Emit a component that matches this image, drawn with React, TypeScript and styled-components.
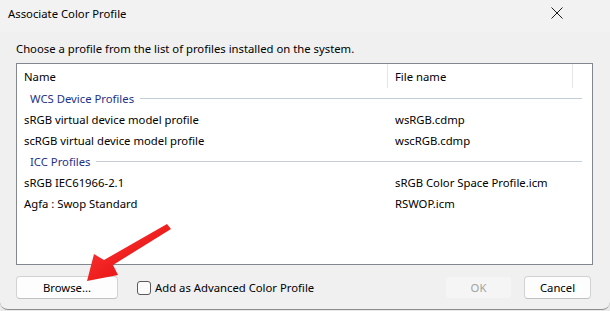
import styled, { createGlobalStyle } from 'styled-components'

const GlobalStyle = createGlobalStyle`
  html, body {
    margin: 0;
    padding: 0;
    background: #e9e9e9;
  }
  body {
    font-family: 'Noto Sans', 'Open Sans', sans-serif;
    font-size: 11.3px;
    color: #000;
  }
`

const Window = styled.div`
  position: relative;
  width: 610px;
  height: 309px;
  background: #f0f0f0;
  border-bottom: 1px solid #8c8c8c;
  border-radius: 0 0 8px 8px;
  display: flex;
  flex-direction: column;
  overflow: hidden;
`

const TitleBar = styled.div`
  height: 32px;
  box-sizing: border-box;
  display: flex;
  align-items: center;
  justify-content: space-between;
  padding: 0 0 6px 8px;
  background: #f2f2f2;
`

const TitleText = styled.div`
  font-size: 11.3px;
`

const CloseButton = styled.div`
  width: 46px;
  height: 24px;
  display: flex;
  align-items: center;
  justify-content: center;
  margin-right: 30px;
`

const Body = styled.div`
  flex: 1;
  display: flex;
  flex-direction: column;
  padding: 8px 19px 0 16px;
`

const Prompt = styled.div`
  height: 17px;
  line-height: 17px;
  margin-bottom: 6px;
`

const ListBox = styled.div`
  height: 200px;
  margin-right: -2px;
  background: #fff;
  border: 1px solid #828790;
  display: flex;
  flex-direction: column;
`

const HeaderRow = styled.div`
  height: 24px;
  display: grid;
  grid-template-columns: 371px 185px 1fr;
`

const HeaderCell = styled.div<{ $divider?: boolean }>`
  display: flex;
  align-items: center;
  padding-left: 7px;
  padding-top: 1px;
  border-right: ${(p) => (p.$divider ? '1px solid #e5e5e5' : 'none')};
`

const GroupHeader = styled.div`
  height: 21px;
  display: flex;
  align-items: center;
  padding: 0 10px 0 13px;
  color: #1e3287;
`

const GroupLine = styled.div`
  flex: 1;
  height: 1px;
  background: #c5cdd8;
  margin-left: 6px;
`

const Row = styled.div`
  height: 21px;
  display: grid;
  grid-template-columns: 371px 1fr;
  align-items: center;
`

const Cell = styled.div`
  padding-left: 7px;
  white-space: nowrap;
`

const Footer = styled.div`
  display: flex;
  align-items: center;
  margin-top: 11px;
`

const Button = styled.button<{ $width: number; $disabled?: boolean }>`
  width: ${(p) => p.$width}px;
  flex-shrink: 0;
  height: 23px;
  box-sizing: border-box;
  font: inherit;
  padding: 0 0 1px;
  border-radius: 4px;
  border: 1px solid ${(p) => (p.$disabled ? '#f0f0f0' : '#d2d2d2')};
  border-bottom-color: ${(p) => (p.$disabled ? '#f0f0f0' : '#c0c0c0')};
  background: ${(p) => (p.$disabled ? '#f5f5f5' : '#fdfdfd')};
  color: ${(p) => (p.$disabled ? '#a2a2a2' : '#000')};
`

const CheckLabel = styled.label`
  display: flex;
  align-items: center;
  margin-left: 19px;
  flex: 1;
`

const CheckBox = styled.span`
  width: 12px;
  height: 12px;
  border: 1px solid #5a5a5a;
  border-radius: 3px;
  background: #fbfbfb;
  margin-right: 4px;
`

const Spacer = styled.div`
  width: 12px;
  flex-shrink: 0;
`

const Arrow = styled.svg`
  position: absolute;
  left: 0;
  top: 0;
  pointer-events: none;
`

type Profile = { name: string; file: string }

const groups: { title: string; items: Profile[] }[] = [
  {
    title: 'WCS Device Profiles',
    items: [
      { name: 'sRGB virtual device model profile', file: 'wsRGB.cdmp' },
      { name: 'scRGB virtual device model profile', file: 'wscRGB.cdmp' },
    ],
  },
  {
    title: 'ICC Profiles',
    items: [
      { name: 'sRGB IEC61966-2.1', file: 'sRGB Color Space Profile.icm' },
      { name: 'Agfa : Swop Standard', file: 'RSWOP.icm' },
    ],
  },
]

export default function App() {
  return (
    <>
      <GlobalStyle />
      <Window>
        <TitleBar>
          <TitleText>Associate Color Profile</TitleText>
          <CloseButton>
            <svg width='12' height='12' viewBox='0 0 12 12'>
              <path d='M0.5 0.5 L11.5 11.5 M11.5 0.5 L0.5 11.5' stroke='#1a1a1a' strokeWidth='1' />
            </svg>
          </CloseButton>
        </TitleBar>
        <Body>
          <Prompt>Choose a profile from the list of profiles installed on the system.</Prompt>
          <ListBox>
            <HeaderRow>
              <HeaderCell $divider>Name</HeaderCell>
              <HeaderCell $divider>File name</HeaderCell>
              <HeaderCell />
            </HeaderRow>
            {groups.map((g) => (
              <div key={g.title}>
                <GroupHeader>
                  {g.title}
                  <GroupLine />
                </GroupHeader>
                {g.items.map((it) => (
                  <Row key={it.name}>
                    <Cell>{it.name}</Cell>
                    <Cell>{it.file}</Cell>
                  </Row>
                ))}
              </div>
            ))}
          </ListBox>
          <Footer>
            <Button $width={102}>Browse...</Button>
            <CheckLabel>
              <CheckBox />
              Add as Advanced Color Profile
            </CheckLabel>
            <Button $width={67} $disabled>OK</Button>
            <Spacer />
            <Button $width={67}>Cancel</Button>
          </Footer>
        </Body>
        <Arrow width='610' height='311' viewBox='0 0 610 311'>
          <defs>
            <linearGradient id='arrowFill' x1='0' y1='0' x2='1' y2='1'>
              <stop offset='0' stopColor='#ff4040' />
              <stop offset='1' stopColor='#e00000' />
            </linearGradient>
          </defs>
          <path
            d='M167 224 L171 229 L113 265 L118 275 L87 281 L94 254 L104 260 Z'
            fill='url(#arrowFill)'
          />
        </Arrow>
      </Window>
    </>
  )
}
